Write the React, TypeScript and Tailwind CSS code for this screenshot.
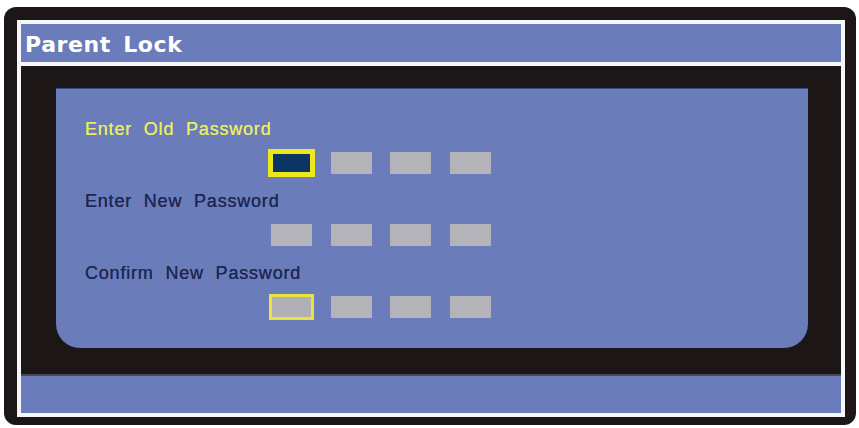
import React from 'react';

const BLUE = 'bg-[#6a7cba]';

function Box({ variant }: { variant?: 'active' | 'outline' }) {
  if (variant === 'active') {
    return (
      <div className="w-[41px] h-[22px] bg-[#0c3566] ring-[3px] ring-[#ede81c] inset-ring-2 inset-ring-[#ede81c]" />
    );
  }
  if (variant === 'outline') {
    return <div className="w-[41px] h-[22px] bg-[#b0b0b8] ring-2 ring-[#ebe43a] inset-ring-1 inset-ring-[#ebe43a]" />;
  }
  return <div className="w-[41px] h-[22px] bg-[#b3b3b9]" />;
}

function Field({
  label,
  highlight,
  first,
  className,
}: {
  label: string;
  highlight?: boolean;
  first?: 'active' | 'outline';
  className?: string;
}) {
  return (
    <div className={className}>
      <div
        className={`h-[20px] leading-[20px] text-[18px] tracking-[0.8px] [word-spacing:6px] [text-shadow:0_0_0.6px_currentColor] ${
          highlight ? 'text-[#ecec5e]' : 'text-[#1d2753]'
        }`}
        style={{ fontFamily: '"Liberation Sans", Arial, sans-serif' }}
      >
        {label}
      </div>
      <div className="mt-[13px] ml-[186px] flex gap-[18.5px]">
        <Box variant={first} />
        <Box />
        <Box />
        <Box />
      </div>
    </div>
  );
}

export default function App() {
  return (
    <div className="w-[859px] h-[428px] bg-white pt-[7px] pl-[4px]">
      <div className="w-[852px] h-[418px] bg-[#1c1616] rounded-[12px] pt-[13px] pl-[13px] pr-[11px] pb-[8px]">
        <div className="h-full border-4 border-[#f4f6fa] flex flex-col">
          {/* Header */}
          <div className={`h-[38px] ${BLUE} px-[4px] pt-[2px] flex items-center`}>
            <span
              className="text-white font-bold text-[22px] tracking-[0.6px] [word-spacing:4px]"
              style={{ fontFamily: '"DejaVu Sans", Verdana, sans-serif' }}
            >
              Parent Lock
            </span>
          </div>
          <div className="h-[4px] bg-[#f4f6fa]" />

          {/* Main */}
          <div className="flex-1 bg-[#1c1616] pl-[35px] pt-[22px] pr-[33px] pb-[26px] border-b-2 border-[#4a4a55]">
            <div className={`h-full ${BLUE} rounded-b-[24px] pl-[29px] pt-[31px] shadow-[inset_0_1px_0_#3c4a80]`}>
              <Field label="Enter Old Password" highlight first="active" />
              <Field label="Enter New Password" className="mt-[17px]" />
              <Field label="Confirm New Password" first="outline" className="mt-[17px]" />
            </div>
          </div>

          {/* Footer */}
          <div className={`h-[37px] ${BLUE}`} />
        </div>
      </div>
    </div>
  );
}
